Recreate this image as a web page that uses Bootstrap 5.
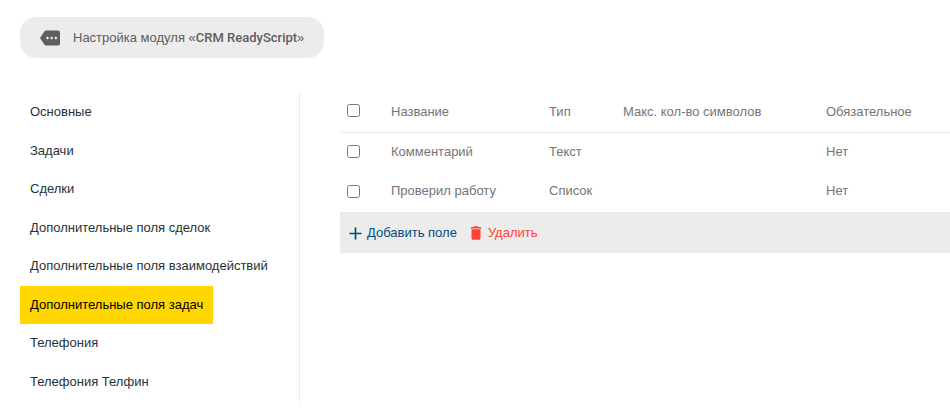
<!DOCTYPE html>
<html lang="ru">
<head>
<meta charset="utf-8">
<meta name="viewport" content="width=device-width, initial-scale=1">
<title>Настройка модуля «CRM ReadyScript»</title>
<link href="https://cdn.jsdelivr.net/npm/bootstrap@5.3.0/dist/css/bootstrap.min.css" rel="stylesheet">
<style>
  body { font-family: "Liberation Sans", Arial, sans-serif; font-size: 13px; line-height: 1.43; color: #6b6b6b; }
  .page { padding: 17px 0 12px 20px; }
  .module-title { background: #ececec; border-radius: 16px; padding: 0 20px; height: 41px; gap: 13px; line-height: 20px; color: #5e5e5e; margin-bottom: 35px; }
  .module-title strong { font-family: Roboto, "Noto Sans", sans-serif; font-weight: 500; }
  .layout { gap: 40px; }
  .side-menu { width: 280px; border-right: 1px solid #ececec; }
  .side-menu .nav-link { padding: 10px; color: #263238; }
  .side-menu .nav-link.active { background: #ffd600; color: #000; }
  .fields { --bs-table-bg: transparent; color: #757575; }
  .fields > :not(caption) > * > * { color: #757575; border: 0; border-bottom: 1px solid transparent; padding: 10px; font-weight: 400; vertical-align: middle; white-space: nowrap; }
  .fields > thead > tr > th { border-bottom-color: #ececec; }
  .fields > tbody > tr > .pick { padding: 0 7px; }
  .fields > thead > tr > .pick { padding: 0 7px 4px; }
  .pick input { display: block; width: 13px; height: 13px; margin: 0; }
  .col-pick { width: 41px; }
  .col-name { width: 158px; }
  .col-type { width: 74px; }
  .col-max { width: 203px; }
  .actions { background: #ececec; height: 41px; padding: 2px 7px 0; gap: 10px; }
  .actions .btn { font-size: 13px; line-height: 20px; gap: 3px; }
  .add { --bs-btn-color: #004b7f; --bs-btn-hover-color: #004b7f; }
  .remove { --bs-btn-color: #ff4336; --bs-btn-hover-color: #ff4336; }
</style>
<script src="https://cdn.jsdelivr.net/npm/bootstrap@5.3.0/dist/js/bootstrap.bundle.min.js" defer></script>
</head>
<body>
<div class="page">
  <header class="module-title d-inline-flex align-items-center">
    <svg width="20" height="20" viewBox="0 0 24 24" fill="#5e5e5e" aria-hidden="true"><path d="M22 3H7c-.69 0-1.23.35-1.59.88L0 12l5.41 8.11c.36.53.97.89 1.66.89H22c1.100 0 2-.9 2-2V5c0-1.100-.9-2-2-2zM9 13.500c-.83 0-1.500-.67-1.500-1.500s.67-1.500 1.500-1.500 1.500.67 1.500 1.500-.67 1.500-1.500 1.500zm5 0c-.83 0-1.500-.67-1.500-1.500s.67-1.500 1.500-1.500 1.500.67 1.500 1.500-.67 1.500-1.500 1.500zm5 0c-.83 0-1.500-.67-1.500-1.500s.67-1.500 1.500-1.500 1.500.67 1.500 1.500-.67 1.500-1.500 1.500z"/></svg>
    <span>Настройка модуля «<strong>CRM ReadyScript</strong>»</span>
  </header>
  <div class="layout d-flex align-items-stretch">
    <nav class="side-menu nav flex-column align-items-start flex-shrink-0" aria-label="Разделы настроек">
      <a class="nav-link" href="#">Основные</a>
      <a class="nav-link" href="#">Задачи</a>
      <a class="nav-link" href="#">Сделки</a>
      <a class="nav-link" href="#">Дополнительные поля сделок</a>
      <a class="nav-link" href="#">Дополнительные поля взаимодействий</a>
      <a class="nav-link active" href="#" aria-current="page">Дополнительные поля задач</a>
      <a class="nav-link" href="#">Телефония</a>
      <a class="nav-link" href="#">Телефония Телфин</a>
    </nav>
    <main class="flex-grow-1">
      <table class="fields table mb-0">
        <colgroup><col class="col-pick"><col class="col-name"><col class="col-type"><col class="col-max"><col></colgroup>
        <thead>
          <tr>
            <th class="pick"><input type="checkbox" aria-label="Выбрать все"></th>
            <th>Название</th><th>Тип</th><th>Макс. кол-во символов</th><th>Обязательное</th>
          </tr>
        </thead>
        <tbody>
          <tr>
            <td class="pick"><input type="checkbox" id="f1" aria-label="Комментарий"></td>
            <td><label for="f1">Комментарий</label></td><td>Текст</td><td></td><td>Нет</td>
          </tr>
          <tr>
            <td class="pick"><input type="checkbox" id="f2" aria-label="Проверил работу"></td>
            <td><label for="f2">Проверил работу</label></td><td>Список</td><td></td><td>Нет</td>
          </tr>
        </tbody>
      </table>
      <div class="actions d-flex align-items-center">
        <button type="button" class="add btn border-0 p-0 d-flex align-items-center">
          <svg width="17" height="17" viewBox="0 0 24 24" fill="currentColor" aria-hidden="true"><path d="M20.500 13.200h-7.300v7.300h-2.400v-7.300H3.500v-2.400h7.300V3.500h2.400v7.300h7.300z"/></svg>
          <span>Добавить поле</span>
        </button>
        <button type="button" class="remove btn border-0 p-0 d-flex align-items-center">
          <svg width="18" height="18" viewBox="0 0 24 24" fill="currentColor" aria-hidden="true"><path d="M6 19c0 1.100.9 2 2 2h8c1.100 0 2-.9 2-2V7H6v12zM19 4h-3.500l-1-1h-5l-1 1H5v2h14V4z"/></svg>
          <span>Удалить</span>
        </button>
      </div>
    </main>
  </div>
</div>
</body>
</html>
